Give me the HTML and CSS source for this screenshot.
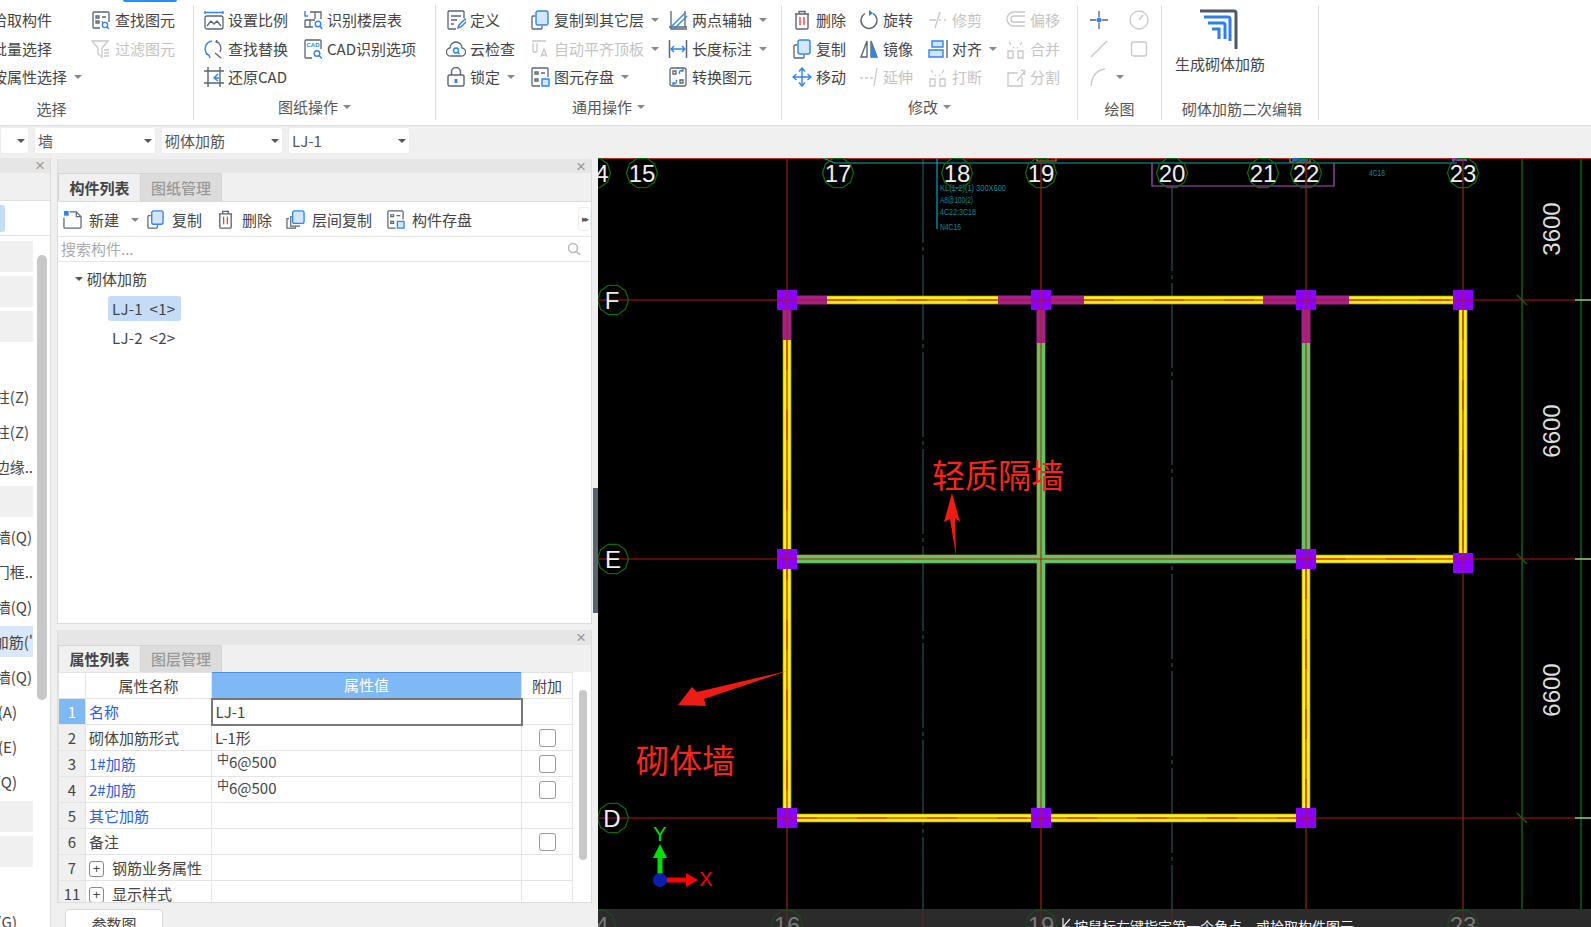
FILE: index.html
```html
<!DOCTYPE html>
<html lang="zh-CN">
<head>
<meta charset="utf-8">
<title>砌体加筋</title>
<link rel="stylesheet" href="styles.css">
</head>
<body>
<svg class="defs" width="0" height="0" aria-hidden="true">
  <defs>
    <symbol id="i-find" viewBox="0 0 20 20"><g fill="none" stroke="currentColor" stroke-width="1.3"><path d="M9 18H3a1 1 0 0 1-1-1V3a1 1 0 0 1 1-1h14a1 1 0 0 1 1 1v9"/><path d="M5 6h3v2H5zM5 11h3v2H5zM11 7h4M11 12h1"/></g><g class="ac"><circle cx="14" cy="15" r="2.6"/><path d="M16 17l2 2"/></g></symbol>
    <symbol id="i-filter" viewBox="0 0 20 20"><g fill="none" stroke="currentColor" stroke-width="1.3"><path d="M1 2h16l-6 7v9l-4-3V9z"/><path d="M13 11h5M13 14h5M13 17h5"/></g></symbol>
    <symbol id="i-scale" viewBox="0 0 20 20"><g fill="none" stroke="currentColor" stroke-width="1.3"><rect x="1" y="6" width="18" height="13" rx="2"/><path d="M3 16l4-5 3 3 3-3 4 5"/></g><path class="ac" d="M1 1v3M19 1v3M1 2.500h18"/></symbol>
    <symbol id="i-replace" viewBox="0 0 20 20"><path class="ac" d="M8 2A8 8 0 0 0 4 16M2 15l3 1 1 3"/><g fill="none" stroke="currentColor" stroke-width="1.3"><path d="M12 2a8 8 0 0 1 4 11M13 1l-1 2 2 1M11 14l6 5"/></g></symbol>
    <symbol id="i-restore" viewBox="0 0 20 20"><g fill="none" stroke="currentColor" stroke-width="1.4"><path d="M4 0v20M16 0v20M0 4h20M0 16h20"/></g><path class="ac" d="M14 7l-4 4 4 3M10 11h5"/></symbol>
    <symbol id="i-floor" viewBox="0 0 20 20"><g fill="none" stroke="currentColor" stroke-width="1.3"><path d="M7 2h11v7M12 2v7M2 10h10M2 10v7h8M7 10v7"/></g><path class="ac" d="M2 1v5h3"/><g class="ac"><circle cx="15" cy="14" r="2.800"/><path d="M17 16l2 3"/></g></symbol>
    <symbol id="i-cad" viewBox="0 0 20 20"><g fill="none" stroke="currentColor" stroke-width="1.3"><path d="M9 19H3a1 1 0 0 1-1-1V2a1 1 0 0 1 1-1h14a1 1 0 0 1 1 1v8"/></g><text x="3.500" y="8" class="cadt">CAD</text><g class="ac"><circle cx="14" cy="14.500" r="2.800"/><path d="M16 16.500l3 3"/></g></symbol>
    <symbol id="i-def" viewBox="0 0 20 20"><g fill="none" stroke="currentColor" stroke-width="1.3"><path d="M10 19H3a1 1 0 0 1-1-1V2a1 1 0 0 1 1-1h14a1 1 0 0 1 1 1v6"/><path d="M5 6h10M5 10h6M5 14h3"/></g><path class="ac" d="M12 18l1-3 6-6 2 2-6 6z"/></symbol>
    <symbol id="i-cloud" viewBox="0 0 20 20"><path fill="none" stroke="currentColor" stroke-width="1.3" d="M5 17a4 4 0 0 1-1-8 6 6 0 0 1 12 0 4 4 0 0 1-1 8z"/><g class="ac"><circle cx="10" cy="11.500" r="2.500"/><path d="M12 13.500l1.500 1.500"/></g></symbol>
    <symbol id="i-lock" viewBox="0 0 20 20"><g fill="none" stroke="currentColor" stroke-width="1.4"><rect x="2" y="8" width="16" height="11" rx="1.500"/><path d="M5.500 8V5a4.500 4.500 0 0 1 9 0v3"/></g><path class="acf" d="M8.500 12h3v4h-3z"/></symbol>
    <symbol id="i-copy" viewBox="0 0 20 20"><path fill="none" stroke="currentColor" stroke-width="1.3" d="M5 6H3a1 1 0 0 0-1 1v11a1 1 0 0 0 1 1h8a1 1 0 0 0 1-1v-2"/><rect class="acb" x="6" y="1" width="12" height="14" rx="2"/></symbol>
    <symbol id="i-stack" viewBox="0 0 20 20"><path fill="none" stroke="currentColor" stroke-width="1.3" d="M6 7H5v10h9v-1M3 9H1v10h9v-1"/><rect class="acb" x="7" y="1" width="12" height="13" rx="2"/></symbol>
    <symbol id="i-autoalign" viewBox="0 0 20 20"><g fill="none" stroke="currentColor" stroke-width="1.3"><path d="M2 2h14M3 4v9M7 4v9M3 13h4"/><path d="M11 18l3-8 3 8M12 16h4"/></g></symbol>
    <symbol id="i-save" viewBox="0 0 20 20"><g fill="none" stroke="currentColor" stroke-width="1.3"><path d="M10 19H3a1 1 0 0 1-1-1V2a1 1 0 0 1 1-1h14a1 1 0 0 1 1 1v8"/><path d="M5 5h3v2H5zM11 6h4M5 12h3v2H5z"/></g><path class="acb" d="M12 12h7v7h-7z"/></symbol>
    <symbol id="i-axis" viewBox="0 0 20 20"><g fill="none" stroke="currentColor" stroke-width="1.300"><path d="M3 1v18h16M1 17h18M17 1v16"/></g><path class="ac" d="M3 17L17 3M6 19L19 6"/></symbol>
    <symbol id="i-dim" viewBox="0 0 20 20"><g fill="none" stroke="currentColor" stroke-width="1.500"><path d="M1.500 1v18M18.500 1v18"/></g><path class="ac" d="M3 10h14M6 7l-3 3 3 3M14 7l3 3-3 3"/></symbol>
    <symbol id="i-conv" viewBox="0 0 20 20"><g fill="none" stroke="currentColor" stroke-width="1.300"><rect x="2" y="1" width="16" height="18" rx="2"/><path d="M5 4h3v3H5zM12 13h3v3h-3z"/></g><path class="ac" d="M12 7a2 2 0 0 1 3-3M15 2v2h-2M8 13a2 2 0 0 1-3 3M5 18v-2h2"/></symbol>
    <symbol id="i-del" viewBox="0 0 20 20"><g fill="none" stroke="currentColor" stroke-width="1.400"><path d="M3 4h14M7 4V1.500h6V4M4 4v14a1 1 0 0 0 1 1h10a1 1 0 0 0 1-1V4"/></g><path class="rd" d="M8 7v8M12 7v8"/></symbol>
    <symbol id="i-rot" viewBox="0 0 20 20"><path fill="none" stroke="currentColor" stroke-width="1.400" d="M6 3.500a8 8 0 1 0 8 0"/><path class="acf" d="M10 0l4 3-4 3z"/></symbol>
    <symbol id="i-trim" viewBox="0 0 20 20"><g fill="none" stroke="currentColor" stroke-width="1.300"><path d="M1 10h7M11 10h2M16 10h2M12 2l-5 16"/></g></symbol>
    <symbol id="i-off" viewBox="0 0 20 20"><g fill="none" stroke="currentColor" stroke-width="1.300"><path d="M19 2H8a7 7 0 0 0 0 14h11M19 6H8a3 3 0 0 0 0 6h11"/></g></symbol>
    <symbol id="i-mirror" viewBox="0 0 20 20"><path fill="none" stroke="currentColor" stroke-width="1.400" d="M8 2L2 18h6zM12 2l6 16h-6z"/><path class="acf" d="M12 2l6 16h-6z"/></symbol>
    <symbol id="i-align" viewBox="0 0 20 20"><path fill="none" stroke="currentColor" stroke-width="1.400" d="M19 1v18"/><path class="acb" d="M4 2h11v6H4zM1 11h14v7H1z"/></symbol>
    <symbol id="i-merge" viewBox="0 0 20 20"><g fill="none" stroke="currentColor" stroke-width="1.300"><path d="M2 12h5v7H2zM12 12h5v7h-5zM3 3l2 3M16 3l-2 3M8 9l-1-1M11 9l1-1"/></g></symbol>
    <symbol id="i-move" viewBox="0 0 20 20"><path class="ac" d="M10 2v16M2 10h16M7 4.500L10 1l3 3.500M7 15.500l3 3.500 3-3.500M4.500 7L1 10l3.500 3M15.500 7l3.500 3-3.500 3"/></symbol>
    <symbol id="i-ext" viewBox="0 0 20 20"><g fill="none" stroke="currentColor" stroke-width="1.300"><path d="M1 11h3M6 11h3M11 11h3M18 1l-3 18"/></g></symbol>
    <symbol id="i-split" viewBox="0 0 20 20"><g fill="none" stroke="currentColor" stroke-width="1.300"><path d="M12 6H2v13h14V10M11 14l8-10M15 3l4 1-1 4"/></g></symbol>
    <symbol id="i-pt" viewBox="0 0 20 20"><path fill="none" stroke="currentColor" stroke-width="1.300" d="M10 1v6M10 13v6M1 10h6M13 10h6"/><circle class="acf" cx="10" cy="10" r="2.500"/></symbol>
    <symbol id="i-circ" viewBox="0 0 20 20"><g fill="none" stroke="currentColor" stroke-width="1.300"><circle cx="10" cy="10" r="9"/><path d="M14 5l-4 5"/></g></symbol>
    <symbol id="i-line" viewBox="0 0 20 20"><path fill="none" stroke="currentColor" stroke-width="1.300" d="M2 18L18 2"/></symbol>
    <symbol id="i-rect" viewBox="0 0 20 20"><rect fill="none" stroke="currentColor" stroke-width="1.300" x="2.500" y="3" width="15" height="14" rx="2"/></symbol>
    <symbol id="i-arc" viewBox="0 0 20 20"><path fill="none" stroke="currentColor" stroke-width="1.300" d="M2 19C3 9 8 3 16 2"/></symbol>
    <symbol id="i-new" viewBox="0 0 20 20"><path fill="none" stroke="currentColor" stroke-width="1.300" d="M7 2h7l5 5v11a1 1 0 0 1-1 1H2a1 1 0 0 1-1-1V8M14 2v5h5"/><path class="acf" d="M1 1h5v5H1z"/></symbol>
    <symbol id="i-big" viewBox="0 0 38 40"><path class="bigd" d="M0 2h34a2 2 0 0 1 2 2v36"/><path class="bigb" d="M4 8h24a2 2 0 0 1 2 2v22M8 14h15a2 2 0 0 1 2 2v14M12 20h7v10"/></symbol>
    <polygon id="bb" points="15.500,0 12.500,9.100 4.800,14.700 -4.800,14.700 -12.500,9.100 -15.500,0 -12.500,-9.100 -4.800,-14.700 4.800,-14.700 12.500,-9.100"/>
    <path id="wy" d="M827 300H998M1084 300H1263M1349 300H1453M787 340V808M1463 310V553M1306 569V808M1316 559H1453M787 818H1296"/>
    <path id="wg" d="M797 559H1296M1041 343V808M1306 343V549"/>
    <path id="wm" d="M787 300H827M998 300H1084M1263 300H1349M787 310V340M1041 310V343M1306 310V343"/>
  </defs>
</svg>

<div class="topmark"></div>
<header class="ribbon">
  <section class="group g1">
    <div class="gbody">
      <div class="col c1a">
        <div class="item"><span>拾取构件</span></div>
        <div class="item"><span>批量选择</span></div>
        <div class="item"><span>按属性选择</span><i class="car"></i></div>
      </div>
      <div class="col">
        <div class="item"><svg class="ic"><use href="#i-find"/></svg><span>查找图元</span></div>
        <div class="item off"><svg class="ic"><use href="#i-filter"/></svg><span>过滤图元</span></div>
      </div>
    </div>
    <div class="glabel">选择</div>
  </section>
  <section class="group g2">
    <div class="gbody">
      <div class="col c2a">
        <div class="item"><svg class="ic"><use href="#i-scale"/></svg><span>设置比例</span></div>
        <div class="item"><svg class="ic"><use href="#i-replace"/></svg><span>查找替换</span></div>
        <div class="item"><svg class="ic"><use href="#i-restore"/></svg><span>还原CAD</span></div>
      </div>
      <div class="col">
        <div class="item"><svg class="ic"><use href="#i-floor"/></svg><span>识别楼层表</span></div>
        <div class="item"><svg class="ic"><use href="#i-cad"/></svg><span>CAD识别选项</span></div>
      </div>
    </div>
    <div class="glabel">图纸操作<i class="car"></i></div>
  </section>
  <section class="group g3">
    <div class="gbody">
      <div class="col c3a">
        <div class="item"><svg class="ic"><use href="#i-def"/></svg><span>定义</span></div>
        <div class="item"><svg class="ic"><use href="#i-cloud"/></svg><span>云检查</span></div>
        <div class="item"><svg class="ic"><use href="#i-lock"/></svg><span>锁定</span><i class="car"></i></div>
      </div>
      <div class="col c3b">
        <div class="item"><svg class="ic"><use href="#i-copy"/></svg><span>复制到其它层</span><i class="car"></i></div>
        <div class="item off"><svg class="ic"><use href="#i-autoalign"/></svg><span>自动平齐顶板</span><i class="car"></i></div>
        <div class="item"><svg class="ic"><use href="#i-save"/></svg><span>图元存盘</span><i class="car"></i></div>
      </div>
      <div class="col">
        <div class="item"><svg class="ic"><use href="#i-axis"/></svg><span>两点辅轴</span><i class="car"></i></div>
        <div class="item"><svg class="ic"><use href="#i-dim"/></svg><span>长度标注</span><i class="car"></i></div>
        <div class="item"><svg class="ic"><use href="#i-conv"/></svg><span>转换图元</span></div>
      </div>
    </div>
    <div class="glabel">通用操作<i class="car"></i></div>
  </section>
  <section class="group g4">
    <div class="gbody">
      <div class="col c4a">
        <div class="item"><svg class="ic"><use href="#i-del"/></svg><span>删除</span></div>
        <div class="item"><svg class="ic"><use href="#i-copy"/></svg><span>复制</span></div>
        <div class="item"><svg class="ic"><use href="#i-move"/></svg><span>移动</span></div>
      </div>
      <div class="col c4b">
        <div class="item"><svg class="ic"><use href="#i-rot"/></svg><span>旋转</span></div>
        <div class="item"><svg class="ic"><use href="#i-mirror"/></svg><span>镜像</span></div>
        <div class="item off"><svg class="ic"><use href="#i-ext"/></svg><span>延伸</span></div>
      </div>
      <div class="col c4c">
        <div class="item off"><svg class="ic"><use href="#i-trim"/></svg><span>修剪</span></div>
        <div class="item"><svg class="ic"><use href="#i-align"/></svg><span>对齐</span><i class="car"></i></div>
        <div class="item off"><svg class="ic"><use href="#i-merge"/></svg><span>打断</span></div>
      </div>
      <div class="col">
        <div class="item off"><svg class="ic"><use href="#i-off"/></svg><span>偏移</span></div>
        <div class="item off"><svg class="ic"><use href="#i-merge"/></svg><span>合并</span></div>
        <div class="item off"><svg class="ic"><use href="#i-split"/></svg><span>分割</span></div>
      </div>
    </div>
    <div class="glabel">修改<i class="car"></i></div>
  </section>
  <section class="group g5">
    <div class="gbody">
      <div class="col c5a">
        <div class="item"><svg class="ic"><use href="#i-pt"/></svg></div>
        <div class="item off"><svg class="ic"><use href="#i-line"/></svg></div>
        <div class="item off"><svg class="ic"><use href="#i-arc"/></svg><i class="car"></i></div>
      </div>
      <div class="col">
        <div class="item off"><svg class="ic"><use href="#i-circ"/></svg></div>
        <div class="item off"><svg class="ic"><use href="#i-rect"/></svg></div>
      </div>
    </div>
    <div class="glabel">绘图</div>
  </section>
  <section class="group g6">
    <div class="gbody bigbody">
      <svg class="bigic"><use href="#i-big"/></svg>
      <span>生成砌体加筋</span>
    </div>
    <div class="glabel">砌体加筋二次编辑</div>
  </section>
</header>

<div class="selbar">
  <div class="sel first"><i class="car dark"></i></div>
  <div class="sel"><span>墙</span><i class="car dark"></i></div>
  <div class="sel"><span>砌体加筋</span><i class="car dark"></i></div>
  <div class="sel"><span>LJ-1</span><i class="car dark"></i></div>
</div>

<main class="main">
  <aside class="nav">
    <div class="phead"><span class="x">×</span></div>
    <div class="navtop"></div>
    <div class="navsel"><div class="navpill"></div></div>
    <div class="navlist">
      <div class="nrow ph"></div>
      <div class="nrow ph"></div>
      <div class="nrow ph"></div>
      <div class="nrow"></div>
      <div class="nrow s"><span>框架柱(Z)</span></div>
      <div class="nrow s"><span>构造柱(Z)</span></div>
      <div class="nrow"><span>约束边缘..</span></div>
      <div class="nrow ph"></div>
      <div class="nrow m"><span>剪力墙(Q)</span></div>
      <div class="nrow"><span>人防门框..</span></div>
      <div class="nrow m"><span>砌体墙(Q)</span></div>
      <div class="nrow cur"><span>砌体加筋('</span></div>
      <div class="nrow m"><span>保温墙(Q)</span></div>
      <div class="nrow t"><span>门(A)</span></div>
      <div class="nrow t"><span>梁(E)</span></div>
      <div class="nrow t"><span>墙(Q)</span></div>
      <div class="nrow ph"></div>
      <div class="nrow ph"></div>
      <div class="nrow"></div>
      <div class="nrow t"><span>板(G)</span></div>
    </div>
    <div class="navthumb"></div>
  </aside>

  <div class="mid">
    <section class="panel upper">
      <div class="phead"><span class="x">×</span></div>
      <div class="tabs">
        <div class="tab on">构件列表</div>
        <div class="tab">图纸管理</div>
      </div>
      <div class="tools">
        <div class="tool t-new"><svg class="ic"><use href="#i-new"/></svg><span>新建</span><i class="car"></i></div>
        <div class="tool"><svg class="ic"><use href="#i-copy"/></svg><span>复制</span></div>
        <div class="tool"><svg class="ic"><use href="#i-del"/></svg><span>删除</span></div>
        <div class="tool"><svg class="ic"><use href="#i-stack"/></svg><span>层间复制</span></div>
        <div class="tool"><svg class="ic"><use href="#i-save"/></svg><span>构件存盘</span></div>
        <div class="more">▸▸</div>
      </div>
      <div class="search">
        <span>搜索构件...</span>
        <svg class="lens" viewBox="0 0 14 14"><circle cx="6" cy="6" r="4.500"/><path d="M9.500 9.500L13 13"/></svg>
      </div>
      <div class="tree">
        <div class="troot"><i class="car dark"></i><span>砌体加筋</span></div>
        <div class="tleaf"><span class="pill">LJ-1 &lt;1&gt;</span></div>
        <div class="tleaf"><span class="plain">LJ-2 &lt;2&gt;</span></div>
      </div>
    </section>

    <section class="panel lower">
      <div class="phead"><span class="x">×</span></div>
      <div class="tabs">
        <div class="tab on">属性列表</div>
        <div class="tab">图层管理</div>
      </div>
      <div class="tablewrap">
        <table class="props">
          <colgroup><col class="cn"><col class="cname"><col class="cval"><col class="cadd"></colgroup>
          <thead>
            <tr><th class="num"></th><th>属性名称</th><th class="hv">属性值</th><th>附加</th></tr>
          </thead>
          <tbody>
            <tr><td class="num sel1">1</td><td class="lnk">名称</td><td class="edit">LJ-1</td><td></td></tr>
            <tr><td class="num">2</td><td>砌体加筋形式</td><td>L-1形</td><td class="ck"><span class="box"></span></td></tr>
            <tr><td class="num">3</td><td class="lnk">1#加筋</td><td class="rv"><sup class="rb">中</sup>6@500</td><td class="ck"><span class="box"></span></td></tr>
            <tr><td class="num">4</td><td class="lnk">2#加筋</td><td class="rv"><sup class="rb">中</sup>6@500</td><td class="ck"><span class="box"></span></td></tr>
            <tr><td class="num">5</td><td class="lnk">其它加筋</td><td></td><td></td></tr>
            <tr><td class="num">6</td><td>备注</td><td></td><td class="ck"><span class="box"></span></td></tr>
            <tr><td class="num">7</td><td><span class="plus">+</span>钢筋业务属性</td><td></td><td></td></tr>
            <tr><td class="num">11</td><td><span class="plus">+</span>显示样式</td><td></td><td></td></tr>
          </tbody>
        </table>
        <div class="tscroll"><div class="tthumb"></div></div>
      </div>
    </section>
    <div class="bottab"><span>参数图</span></div>
  </div>

  <div class="split"><div class="splithandle"></div></div>

  <div class="canvas">
    <svg class="cad" viewBox="598 158 993 769" width="993" height="769">
      <path class="dash" d="M923 158V909M1172 186V909"/>
      <path class="gd" d="M1522 158V909M1581 158V909M1517 295l10 10M1517 554l10 10M1517 813l10 10"/>
      <path class="top" d="M598 158.500H1591"/>
      <path class="cy" d="M823 158l12 5H1457M937 158V229"/>
      <path class="pu" d="M1152 163V186H1334V163"/>
      <path class="or" d="M1037 158v3h19v-3M1290 158v4h20v-4"/>
      <path class="bl" d="M1292 158h16v3h-16z"/>
      <path class="pk" d="M1452 158h15v3h-15z"/>
      <text class="tl" x="940" y="191" textLength="66" lengthAdjust="spacingAndGlyphs">KL(1-2)(1) 300X600</text>
      <text class="tl" x="940" y="203" textLength="33" lengthAdjust="spacingAndGlyphs">A8@100(2)</text>
      <text class="tl" x="940" y="215" textLength="36" lengthAdjust="spacingAndGlyphs">4C22;3C18</text>
      <text class="tl" x="940" y="230" textLength="21" lengthAdjust="spacingAndGlyphs">N4C16</text>
      <text class="tl" x="1369" y="176" textLength="16" lengthAdjust="spacingAndGlyphs">4C18</text>

      <use href="#wy" class="w-edge"/><use href="#wg" class="w-edge"/>
      <use href="#wy" class="w-y"/><use href="#wg" class="w-g"/>
      <use href="#wm" class="w-m"/>
      <use href="#wy" class="w-c"/>

      <path class="sq" d="M777 290h20v20h-20zM1031 290h20v20h-20zM1296 290h20v20h-20zM1453 290h20v20h-20zM777 549h20v20h-20zM1296 549h20v20h-20zM1453 553h20v20h-20zM777 808h20v20h-20zM1031 808h20v20h-20zM1296 808h20v20h-20z"/>

      <path class="gv" d="M787 158V909M1041 158V909M1306 158V909M1463 158V909"/>
      <path class="gh" d="M598 300H1591M598 559H1591M598 818H1591"/>
      <path class="lg" d="M1575 300h16M1575 559h16M1575 818h16"/>

      <g class="bub">
        <use href="#bb" x="595" y="173"/><use href="#bb" x="642" y="173"/><use href="#bb" x="838" y="173"/><use href="#bb" x="957" y="173"/><use href="#bb" x="1041" y="173"/><use href="#bb" x="1172" y="173"/><use href="#bb" x="1263" y="173"/><use href="#bb" x="1306" y="173"/><use href="#bb" x="1463" y="173"/>
        <use href="#bb" x="613" y="300"/><use href="#bb" x="613" y="559"/><use href="#bb" x="613" y="818"/>
      </g>
      <g class="bt">
        <text x="602" y="182">4</text><text x="642" y="182">15</text><text x="838" y="182">17</text><text x="957" y="182">18</text><text x="1041" y="182">19</text><text x="1172" y="182">20</text><text x="1263" y="182">21</text><text x="1306" y="182">22</text><text x="1463" y="182">23</text>
        <text x="612" y="309">F</text><text x="613" y="568">E</text><text x="612" y="827">D</text>
      </g>
      <g class="dimt">
        <text transform="translate(1560 229) rotate(-90)">3600</text>
        <text transform="translate(1560 431) rotate(-90)">6600</text>
        <text transform="translate(1560 690) rotate(-90)">6600</text>
      </g>

      <text class="note" x="932" y="488">轻质隔墙</text>
      <text class="note" x="636" y="773">砌体墙</text>
      <path class="arr" d="M956 556L950 519 944 522 952 493 960 522 955 518z"/>
      <path class="arr" d="M787 671L704 699 706 706 678 705 692 687 697 692z"/>

      <path class="axy" d="M660 880V858"/>
      <path class="axyh" d="M653 858l7-14 7 14z"/>
      <path class="axx" d="M664 880H686"/>
      <path class="axxh" d="M686 873l12 7-12 7z"/>
      <ellipse class="axo" cx="660" cy="880" rx="7" ry="7"/>
      <text class="axl y" x="660" y="841">Y</text>
      <text class="axl x" x="706" y="886">X</text>

      <rect class="stat" x="598" y="909" width="993" height="18"/>
      <path class="gvd" d="M787 909V927M1041 909V927M1463 909V927M923 909V927M1172 909V927"/>
      <g class="bubd"><use href="#bb" x="600" y="925"/><use href="#bb" x="787" y="925"/><use href="#bb" x="1041" y="925"/><use href="#bb" x="1463" y="925"/></g>
      <g class="btd"><text x="602" y="934">4</text><text x="787" y="934">16</text><text x="1041" y="934">19</text><text x="1463" y="934">23</text></g>
      <path class="cur" d="M1063 918v9M1063 927h7M1063 927l7-8"/>
      <text class="stt" x="1074" y="932">按鼠标左键指定第一个角点，或拾取构件图元</text>
    </svg>
  </div>
</main>
</body>
</html>
```
FILE: styles.css
```css
* { box-sizing: border-box; }
html, body { margin: 0; padding: 0; }
body {
  position: relative;
  width: 1591px; height: 927px; overflow: hidden;
  background: #f0f0f0; color: #444;
  font-family: "Noto Sans CJK SC", "Noto Sans", sans-serif;
  font-size: 15px; line-height: 1.2;
}
.defs { position: absolute; }
.ac { fill: none; stroke: #2f86ea; stroke-width: 1.4; }
.acf { fill: #2f86ea; stroke: none; }
.acb { fill: #d4e6fb; stroke: #2f86ea; stroke-width: 1.4; }
.rd { fill: none; stroke: #e8433a; stroke-width: 1.4; }
.cadt { font: 700 6px "Liberation Sans", sans-serif; fill: #2f86ea; }
.bigd { fill: none; stroke: #4d5766; stroke-width: 3; }
.bigb { fill: none; stroke: #2f7fe8; stroke-width: 3; }

.topmark { position: absolute; left: 123px; top: 0; width: 54px; height: 2px; background: #1e90ff; border-radius: 0 0 4px 4px; }

/* ribbon */
.ribbon { display: flex; height: 126px; padding-top: 5px; background: #fff; border-bottom: 1px solid #dcdcdc; overflow: hidden; }
.group { display: flex; flex-direction: column; height: 115px; padding-top: 1px; border-right: 1px solid #e0e0e0; flex: none; }
.g1 { width: 194px; }
.g2 { width: 242px; padding-left: 10px; }
.g3 { width: 346px; padding-left: 10px; }
.g4 { width: 296px; padding-left: 10px; }
.g5 { width: 84px; padding-left: 11px; }
.g6 { width: 157px; }
.gbody { display: flex; height: 87px; flex: none; }
.glabel { display: flex; justify-content: center; align-items: center; height: 24px; margin-top: 2px; color: #555; }
.g1 .glabel { margin-right: 90px; margin-top: 4px; }
.g2 .glabel, .g3 .glabel, .g4 .glabel { margin-left: -10px; }
.g5 .glabel { margin-left: -11px; margin-top: 4px; }
.col { flex: none; }
.c1a { width: 99px; margin-left: -8px; }
.c2a { width: 99px; }
.c3a { width: 84px; }
.c3b { width: 138px; }
.c4a { width: 67px; }
.c4b { width: 69px; }
.c4c { width: 78px; }
.c5a { width: 40px; }
.item { display: flex; align-items: center; gap: 4px; height: 28.4px; white-space: nowrap; }
.item.off { color: #c4c4c4; }
.ic { width: 20px; height: 20px; flex: none; color: #5b6573; }
.off .ic { color: #c8c8c8; }
.car { display: inline-block; width: 0; height: 0; margin-left: 5px; border: 4px solid transparent; border-top: 4px solid #888; border-bottom: 0; flex: none; }
.item .car { margin-left: 3px; }
.car.dark { border-top-color: #555; }
.bigbody { flex-direction: column; align-items: center; width: 116px; margin-top: 3px; }
.bigic { width: 38px; height: 40px; margin-left: -3px; color: #4d5766; }
.bigbody span { margin-top: 6px; color: #444; white-space: nowrap; }
.g6 .glabel { margin: 1px 0 0 4px; }

/* select bar */
.selbar { display: flex; gap: 5px; height: 32px; padding-top: 1px; background: #f0f0f0; }
.sel { display: flex; align-items: center; justify-content: space-between; width: 122px; height: 27px; padding: 0 3px 0 3px; background: #fff; border-radius: 3px; border: 1px solid #ececec; color: #555; }
.sel.first { width: 29px; justify-content: flex-end; }

/* main */
.main { display: flex; height: 769px; }
.nav { position: relative; flex: none; width: 51px; background: #fff; border-right: 1px solid #dcdcdc; overflow: hidden; }
.phead { display: flex; justify-content: flex-end; align-items: center; height: 15px; padding-right: 5px; background: #e6e6e6; flex: none; }
.x { font: 17px/15px "Liberation Sans", sans-serif; color: #999; }
.navtop { height: 28px; background: #f0f0f0; border-bottom: 1px solid #e0e0e0; }
.navsel { height: 35px; padding-top: 4px; border-bottom: 1px solid #e0e0e0; }
.navpill { width: 5px; height: 27px; background: #c4dcf6; border-radius: 0 3px 3px 0; }
.navlist { display: flex; flex-direction: column; gap: 4px; width: 33px; margin-top: 5px; }
.nrow { display: flex; justify-content: flex-end; align-items: center; flex: none; height: 31px; white-space: nowrap; overflow: hidden; color: #444; }
.nrow.s { padding-right: 4px; }
.nrow.m { padding-right: 1px; }
.nrow.t { padding-right: 16px; }
.nrow.ph { background: #f0f0f0; }
.nrow.cur { background: #d9e9fb; justify-content: flex-end; }
.navthumb { position: absolute; left: 37px; top: 97px; width: 10px; height: 445px; background: #c8c8c8; border-radius: 5px; }

.mid { position: relative; flex: none; width: 535px; margin-left: 6px; padding-top: 1px; display: flex; flex-direction: column; }
.panel { display: flex; flex: none; flex-direction: column; background: #fff; border: 1px solid #dcdcdc; border-top: 0; }
.upper { height: 465px; }
.lower { height: 273px; margin-top: 6px; overflow: hidden; }
.panel .phead { height: 14px; }
.lower .phead { height: 15px; }
.tabs { display: flex; flex: none; height: 29px; background: #f0f0f0; border-bottom: 1px solid #dcdcdc; }
.lower .tabs { height: 27px; border-bottom: 0; }
.tab { width: 82px; display: flex; align-items: center; justify-content: center; background: #dcdcdc; color: #999; font-weight: 500; border: 1px solid #d4d4d4; border-bottom: 0; }
.tab.on { background: #f0f0f0; color: #444; font-weight: 700; border-right: 0; }
.tools { display: flex; align-items: center; flex: none; height: 35px; padding: 1px 0 0 5px; gap: 14px; border-bottom: 1px solid #e6e6e6; position: relative; }
.tool { display: flex; align-items: center; gap: 7px; white-space: nowrap; }
.tool .ic { width: 19px; height: 19px; }
.t-new { margin-right: -7px; }
.more { position: absolute; right: 0; top: 5px; width: 13px; height: 24px; border: 1px solid #eee; border-radius: 4px; font: 9px/22px "DejaVu Sans", sans-serif; color: #555; text-align: center; letter-spacing: -2px; }
.search { display: flex; justify-content: space-between; align-items: center; flex: none; height: 25px; padding: 0 10px 0 3px; border-bottom: 1px solid #e6e6e6; color: #aaa; }
.lens { width: 14px; height: 14px; fill: none; stroke: #b8b8b8; stroke-width: 1.500; }
.tree { padding: 3px 0 0 17px; }
.troot { display: flex; align-items: center; height: 28px; gap: 4px; }
.troot .car { margin-left: 0; }
.tleaf { display: flex; align-items: center; height: 30px; padding-left: 33px; }
.pill { width: 73px; height: 25px; padding-left: 4px; line-height: 25px; background: #c4dcf6; border-radius: 3px; white-space: nowrap; word-spacing: 3px; letter-spacing: 0.3px; }
.plain { padding-left: 4px; white-space: nowrap; word-spacing: 3px; letter-spacing: 0.3px; }

.tablewrap { display: flex; flex: 1; min-height: 0; overflow: hidden; }
.props { flex: none; width: 514px; height: 234px; border-collapse: collapse; table-layout: fixed; background: #fff; }
.cn { width: 27px; }
.cname { width: 126px; }
.cval { width: 310px; }
.cadd { width: 51px; }
.props th, .props td { height: 26px; padding: 0 0 0 3px; border: 1px solid #e4e4e4; font-size: 15px; font-weight: 400; white-space: nowrap; overflow: hidden; color: #444; text-align: left; }
.props th { text-align: center; padding: 0; }
.props td.num, .props th.num { padding: 0; text-align: center; background: #f0f0f0; }
.props th.num { background: #fff; }
.props th.hv { background: #7eb8f5; color: #fff; border-top: 1px solid #4a90e2; }
.props td.sel1 { background: #7eb8f5; color: #fff; }
.props td.lnk { color: #2b5de0; }
.props td.edit { border: 2px solid #777; }
.props td.ck { padding: 0; text-align: center; }
.props td.rv { padding-bottom: 3px; }
.box { display: inline-block; width: 17px; height: 18px; margin-top: 4px; border: 1px solid #999; border-radius: 3px; background: #fff; }
.rb { font-size: 12px; vertical-align: 4px; line-height: 0; margin-left: 2px; }
.plus { display: inline-block; width: 15px; height: 16px; margin: 0 8px 0 0; border: 1px solid #888; border-radius: 3px; font: 13px/14px "Liberation Sans", sans-serif; text-align: center; vertical-align: 1px; }
.tscroll { flex: 1; position: relative; }
.tthumb { position: absolute; left: 6px; top: 18px; width: 8px; height: 170px; background: #c8c8c8; border-radius: 4px; }
.bottab { flex: none; width: 98px; height: 30px; margin: 6px 0 0 8px; background: #fff; border: 1px solid #d8d8d8; border-radius: 4px 4px 0 0; text-align: center; padding-top: 5px; }

.split { flex: none; width: 6px; padding-top: 330px; }
.splithandle { width: 5px; height: 125px; margin-left: 1px; background: #58656f; }

.canvas { flex: none; width: 993px; height: 769px; background: #000; overflow: hidden; }
.cad { display: block; font-family: "Noto Sans CJK SC", sans-serif; }
.cad path, .cad use { fill: none; }
.dash { stroke: #1f3f47; stroke-width: 1.5; stroke-dasharray: 85 4 4 4; }
.gd { stroke: #0f5f0f; stroke-width: 1.5; }
.top { stroke: #b03018; stroke-width: 1.2; }
.cy { stroke: #12a0b4; stroke-width: 1.2; }
.pu { stroke: #b050c0; stroke-width: 1.2; }
.or { stroke: #c08020; stroke-width: 1.2; }
.cad .bl { fill: #2060c0; }
.cad .pk { fill: #a030c0; }
.tl { font: 9px "Liberation Sans", sans-serif; fill: #0a8f98; }
.w-edge { stroke: #6a6a10; stroke-width: 9; }
.w-y { stroke: #ffee1a; stroke-width: 7.5; }
.w-g { stroke: #66c266; stroke-width: 8; }
.w-m { stroke: #a5208c; stroke-width: 9; }
.w-c { stroke: #ff5a1a; stroke-width: 1.2; stroke-dasharray: 30 40; }
.cad .sq { fill: #8b00ff; }
.gv { stroke: #a02c10; stroke-width: 1.1; }
.gh { stroke: #b41410; stroke-width: 1; }
.lg { stroke: #7ad07a; stroke-width: 1.5; }
.bub use { stroke: #0a6a0a; stroke-width: 1.3; }
.bt text { font: 24px "Liberation Sans", sans-serif; fill: #eee; text-anchor: middle; }
.dimt text { font: 24px "Liberation Sans", sans-serif; fill: #ddd; text-anchor: middle; }
.note { font-size: 33px; fill: #f5261a; }
.cad .arr { fill: #ee1c16; }
.axy { stroke: #00e000; stroke-width: 5; }
.cad .axyh { fill: #00e000; }
.axx { stroke: #f00; stroke-width: 5; }
.cad .axxh { fill: #f00; }
.axo { fill: #0a1fb0; }
.axl { font: 20px "Liberation Sans", sans-serif; text-anchor: middle; }
.axl.y { fill: #00e000; }
.axl.x { fill: #f00; }
.stat { fill: #2b2b2b; }
.gvd { stroke: #5a2a20; stroke-width: 1; }
.bubd use { stroke: #1e4a1e; stroke-width: 1.2; }
.btd text { font: 24px "Liberation Sans", sans-serif; fill: #777; text-anchor: middle; }
.cur { stroke: #eee; stroke-width: 1.2; }
.stt { font-size: 14px; fill: #f2f2f2; }
```
